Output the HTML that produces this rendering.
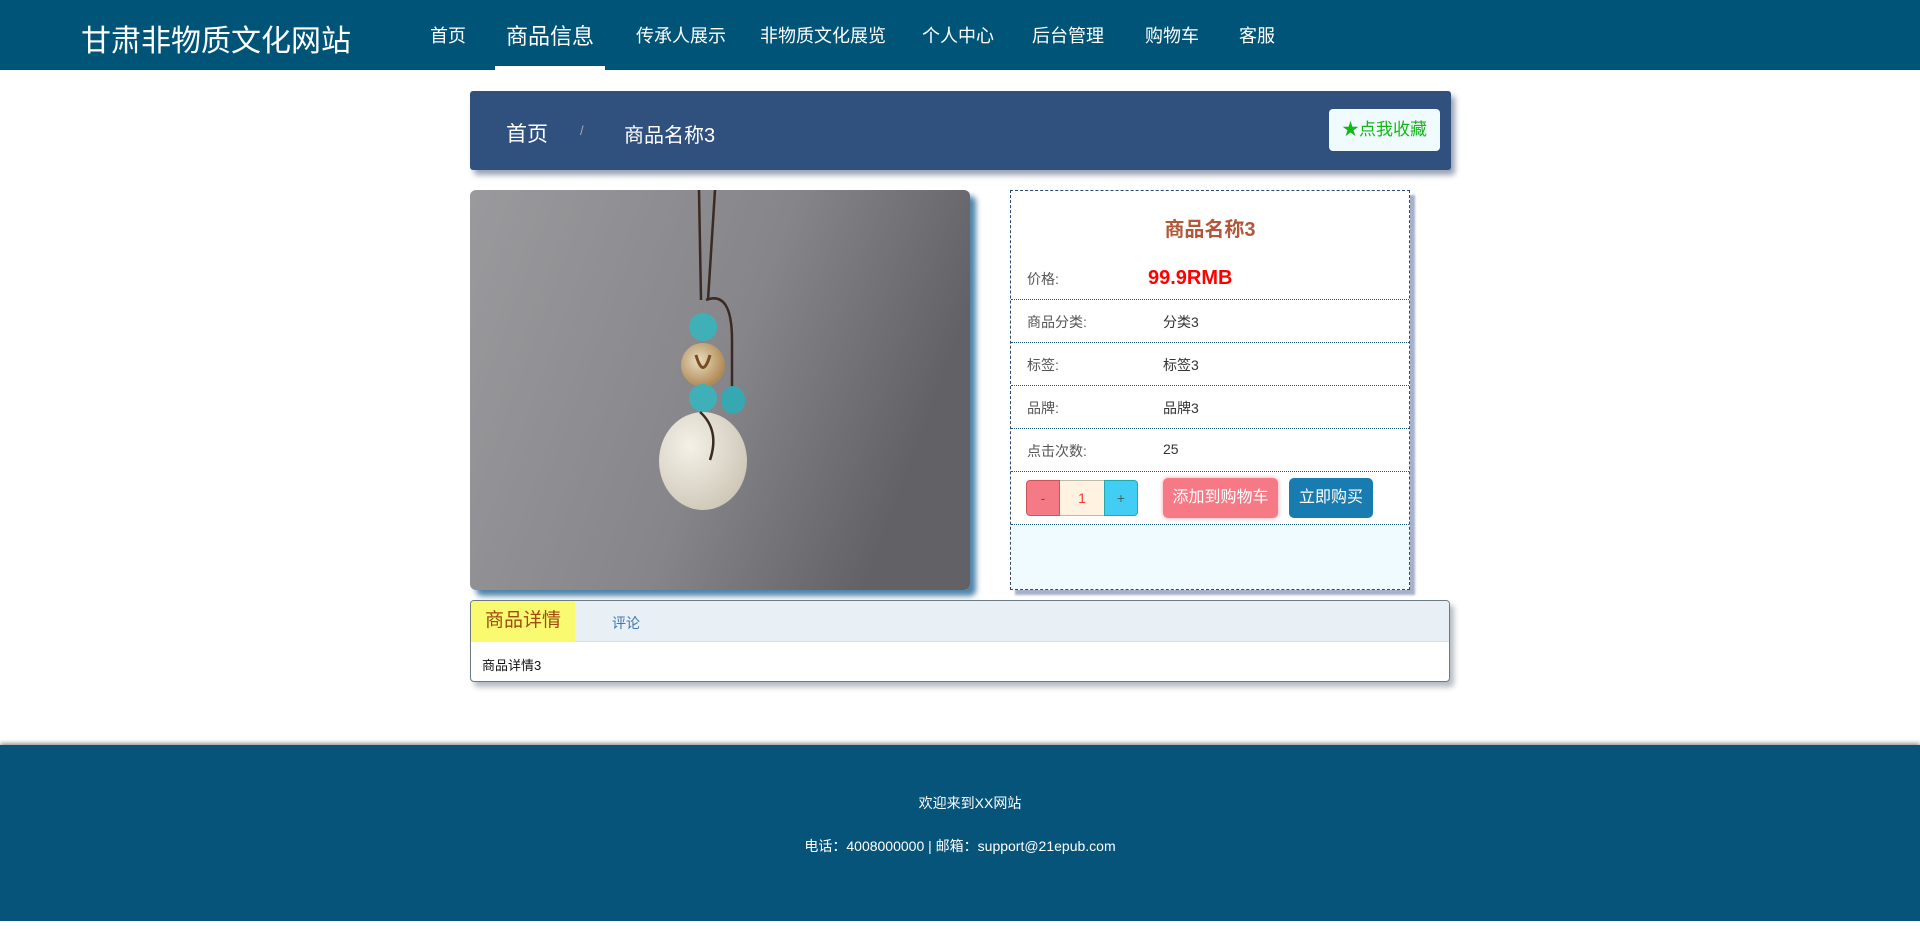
<!DOCTYPE html>
<html><head><meta charset="utf-8">
<style>
*{margin:0;padding:0;box-sizing:border-box}
body{width:1920px;height:929px;position:relative;background:#fff;font-family:"Liberation Sans","Noto Sans CJK SC",sans-serif;overflow:hidden}
.a{position:absolute;white-space:nowrap}
#hdr{left:0;top:0;width:1920px;height:70px;background:#005478}
.nav{color:#fff;font-size:18px;top:22px}
#bc{left:470px;top:91px;width:981px;height:79px;background:#30507e;border-radius:3px;box-shadow:4px 5px 6px rgba(30,50,90,.45)}
#img{left:470px;top:190px;width:500px;height:400px;border-radius:6px;overflow:hidden;box-shadow:6px 6px 6px rgba(20,90,140,.75)}
#info{left:1010px;top:190px;width:400px;height:400px;border:1px dashed #2a4a70;box-shadow:5px 5px 2px rgba(60,80,140,.45);background:#fff}
.row{position:absolute;left:0;width:398px;border-bottom:1px dotted #1a5a80}
.lbl{position:absolute;left:16px;font-size:14px;color:#555}
.val{position:absolute;left:152px;font-size:14px;color:#333}
#tabs{left:470px;top:600px;width:980px;height:82px;border:1px solid #6a7a80;border-radius:4px;box-shadow:4px 5px 6px rgba(40,60,80,.35);overflow:hidden}
#ftr{left:0;top:745px;width:1920px;height:176px;background:#07547a;box-shadow:0 -2px 4px rgba(0,0,0,.4)}
</style></head><body>
<div id="hdr" class="a">
<div class="a" style="left:81px;top:16px;color:#fff;font-size:30px">甘肃非物质文化网站</div>
<div class="a nav" style="left:430px">首页</div>
<div class="a nav" style="left:506px;top:19px;font-size:22px">商品信息</div>
<div class="a" style="left:495px;top:66px;width:110px;height:4px;background:#fff"></div>
<div class="a nav" style="left:636px">传承人展示</div>
<div class="a nav" style="left:760px">非物质文化展览</div>
<div class="a nav" style="left:922px">个人中心</div>
<div class="a nav" style="left:1032px">后台管理</div>
<div class="a nav" style="left:1145px">购物车</div>
<div class="a nav" style="left:1239px">客服</div>
</div>
<div id="bc" class="a">
<div class="a" style="left:36px;top:27px;color:#fff;font-size:21px">首页</div>
<div class="a" style="left:110px;top:32px;color:#aab;font-size:13px">/</div>
<div class="a" style="left:154px;top:28px;color:#fff;font-size:20px">商品名称3</div>
<div class="a" style="left:859px;top:18px;width:111px;height:42px;background:#f0fbff;border-radius:4px;color:#14b814;font-size:17px;line-height:42px;text-align:center">★点我收藏</div>
</div>
<div id="img" class="a">
<svg width="500" height="400" viewBox="0 0 500 400">
<defs><linearGradient id="g" x1="0" y1="0" x2="1" y2="0.3"><stop offset="0" stop-color="#9a9a9d"/><stop offset="0.6" stop-color="#86868a"/><stop offset="1" stop-color="#626266"/></linearGradient>
<radialGradient id="j" cx="0.35" cy="0.35" r="0.7"><stop offset="0" stop-color="#f4f1e8"/><stop offset="1" stop-color="#cfc8b8"/></radialGradient>
<radialGradient id="w" cx="0.4" cy="0.4" r="0.6"><stop offset="0" stop-color="#e8dcc0"/><stop offset="1" stop-color="#b08a55"/></radialGradient></defs>
<rect width="500" height="400" fill="url(#g)"/>
<path d="M229 0 L231 110 M245 0 L238 110" stroke="#3a2a22" stroke-width="2.5" fill="none"/>
<path d="M236 110 Q262 100 262 150 L262 205" stroke="#3a2a22" stroke-width="2.5" fill="none"/>
<circle cx="233" cy="137" r="14" fill="#3fb0b8"/>
<circle cx="233" cy="175" r="22" fill="url(#w)"/>
<path d="M226 165 Q233 190 240 165" stroke="#7a4a20" stroke-width="3" fill="none"/>
<circle cx="233" cy="208" r="14" fill="#3fb0b8"/>
<ellipse cx="263" cy="210" rx="12" ry="14" fill="#36a8b2"/>
<ellipse cx="233" cy="271" rx="44" ry="49" fill="url(#j)"/>
<path d="M230 222 Q250 240 240 270" stroke="#3a2a22" stroke-width="2.5" fill="none"/>
</svg>
</div>
<div id="info" class="a">
<div class="a" style="left:0;width:398px;top:22px;text-align:center;color:#b0583a;font-size:20px;font-weight:bold">商品名称3</div>
<div class="row" style="top:0;height:109px"><span class="lbl" style="top:78px">价格:</span><span class="a" style="left:137px;top:76px;color:#f00;font-size:20px;font-weight:bold">99.9RMB</span></div>
<div class="row" style="top:109px;height:43px"><span class="lbl" style="top:12px">商品分类:</span><span class="val" style="top:12px">分类3</span></div>
<div class="row" style="top:152px;height:43px"><span class="lbl" style="top:12px">标签:</span><span class="val" style="top:12px">标签3</span></div>
<div class="row" style="top:195px;height:43px"><span class="lbl" style="top:12px">品牌:</span><span class="val" style="top:12px">品牌3</span></div>
<div class="row" style="top:238px;height:43px"><span class="lbl" style="top:12px">点击次数:</span><span class="val" style="top:12px">25</span></div>
<div class="row" style="top:281px;height:53px">
<div class="a" style="left:15px;top:8px;width:34px;height:36px;background:#f47a85;border:1px solid #c55;border-radius:4px 0 0 4px;text-align:center;line-height:34px;color:#844;font-size:14px">-</div>
<div class="a" style="left:49px;top:8px;width:44px;height:36px;background:#fff2e0;border-top:1px solid #bba;border-bottom:1px solid #bba;text-align:center;line-height:34px;color:#f33;font-size:14px">1</div>
<div class="a" style="left:93px;top:8px;width:34px;height:36px;background:#42cdf5;border:1px solid #2aa;border-radius:0 4px 4px 0;text-align:center;line-height:34px;color:#466;font-size:14px">+</div>
<div class="a" style="left:152px;top:6px;width:115px;height:40px;background:#f57a85;border-radius:5px;color:#fff;font-size:16px;line-height:40px;text-align:center;box-shadow:0 0 4px #f9a">添加到购物车</div>
<div class="a" style="left:278px;top:6px;width:84px;height:40px;background:#187cb0;border-radius:5px;color:#fff;font-size:16px;line-height:40px;text-align:center">立即购买</div>
</div>
<div class="a" style="left:0;top:335px;width:398px;height:63px;background:#f0fbff"></div>
</div>
<div id="tabs" class="a">
<div class="a" style="left:0;top:0;width:978px;height:41px;background:#e8eff5;border-bottom:1px solid #dde"></div>
<div class="a" style="left:0;top:0;width:104px;height:41px;background:#fafa70;color:#a04a10;font-size:19px;line-height:40px;text-align:center">商品详情</div>
<div class="a" style="left:141px;top:12px;color:#3a7ab0;font-size:14px">评论</div>
<div class="a" style="left:11px;top:54px;color:#111;font-size:13px">商品详情3</div>
</div>
<div id="ftr" class="a">
<div class="a" style="left:10px;width:1920px;top:48px;text-align:center;color:#fff;font-size:14px">欢迎来到XX网站</div>
<div class="a" style="left:0;width:1920px;top:91px;text-align:center;color:#fff;font-size:14px">电话：4008000000 | 邮箱：support@21epub.com</div>
</div>
</body></html>
